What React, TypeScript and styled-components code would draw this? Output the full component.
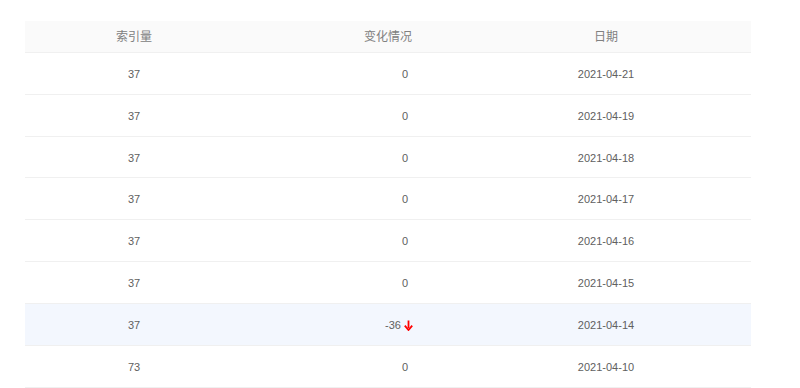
import React from "react";
import styled, { createGlobalStyle } from "styled-components";

const Global = createGlobalStyle`
  html, body { margin: 0; padding: 0; background: #fff; }
  body { font-family: "Liberation Sans", "Noto Sans CJK SC", sans-serif; }
`;

const Page = styled.div`
  padding: 21px 49px 0 25px;
`;

const Table = styled.div`
  width: 726px;
  display: grid;
  grid-template-columns: 218px 290px 146px 1fr;
`;

const HeadCell = styled.div`
  background: #fafafa;
  border-bottom: 1px solid #f0f0f0;
  padding: 6px 0;
  line-height: 18.86px;
  font-size: 12px;
  font-family: "Noto Sans CJK SC", sans-serif;
  color: #808080;
  text-align: center;
`;

const Cell = styled.div<{ $hl?: boolean; $align?: "center" | "right"; $pr?: number }>`
  background: ${(p) => (p.$hl ? "#f3f7fe" : "#fff")};
  border-bottom: 1px solid #f0f0f0;
  padding: 12px ${(p) => p.$pr ?? 0}px 10px 0;
  line-height: 18.86px;
  height: 18.86px;
  font-size: 11px;
  color: #606060;
  text-align: ${(p) => p.$align ?? "center"};
  display: flex;
  align-items: center;
  justify-content: ${(p) => (p.$align === "right" ? "flex-end" : "center")};
  gap: 3px;
`;

const Arrow = () => (
  <svg width="9" height="11" viewBox="0 0 9 11" style={{ display: "block" }}>
    <path d="M4.5 0.5 V8" stroke="#f00" strokeWidth="1.8" />
    <path d="M0.8 5.6 L4.5 10 L8.2 5.6" stroke="#f00" strokeWidth="1.8" fill="none" strokeLinejoin="miter" />
  </svg>
);

const rows = [
  { idx: "37", change: "0", date: "2021-04-21" },
  { idx: "37", change: "0", date: "2021-04-19" },
  { idx: "37", change: "0", date: "2021-04-18" },
  { idx: "37", change: "0", date: "2021-04-17" },
  { idx: "37", change: "0", date: "2021-04-16" },
  { idx: "37", change: "0", date: "2021-04-15" },
  { idx: "37", change: "-36", date: "2021-04-14", down: true, hl: true },
  { idx: "73", change: "0", date: "2021-04-10" },
];

export default function App() {
  return (
    <>
      <Global />
      <Page>
        <Table>
          <HeadCell>索引量</HeadCell>
          <HeadCell>变化情况</HeadCell>
          <HeadCell>日期</HeadCell>
          <HeadCell />
          {rows.map((r, i) => (
            <React.Fragment key={i}>
              <Cell $hl={r.hl}>{r.idx}</Cell>
              <Cell $hl={r.hl} $align="right" $pr={r.down ? 120 : 125}>
                <span>{r.change}</span>
                {r.down && <Arrow />}
              </Cell>
              <Cell $hl={r.hl}>{r.date}</Cell>
              <Cell $hl={r.hl} />
            </React.Fragment>
          ))}
        </Table>
      </Page>
    </>
  );
}
